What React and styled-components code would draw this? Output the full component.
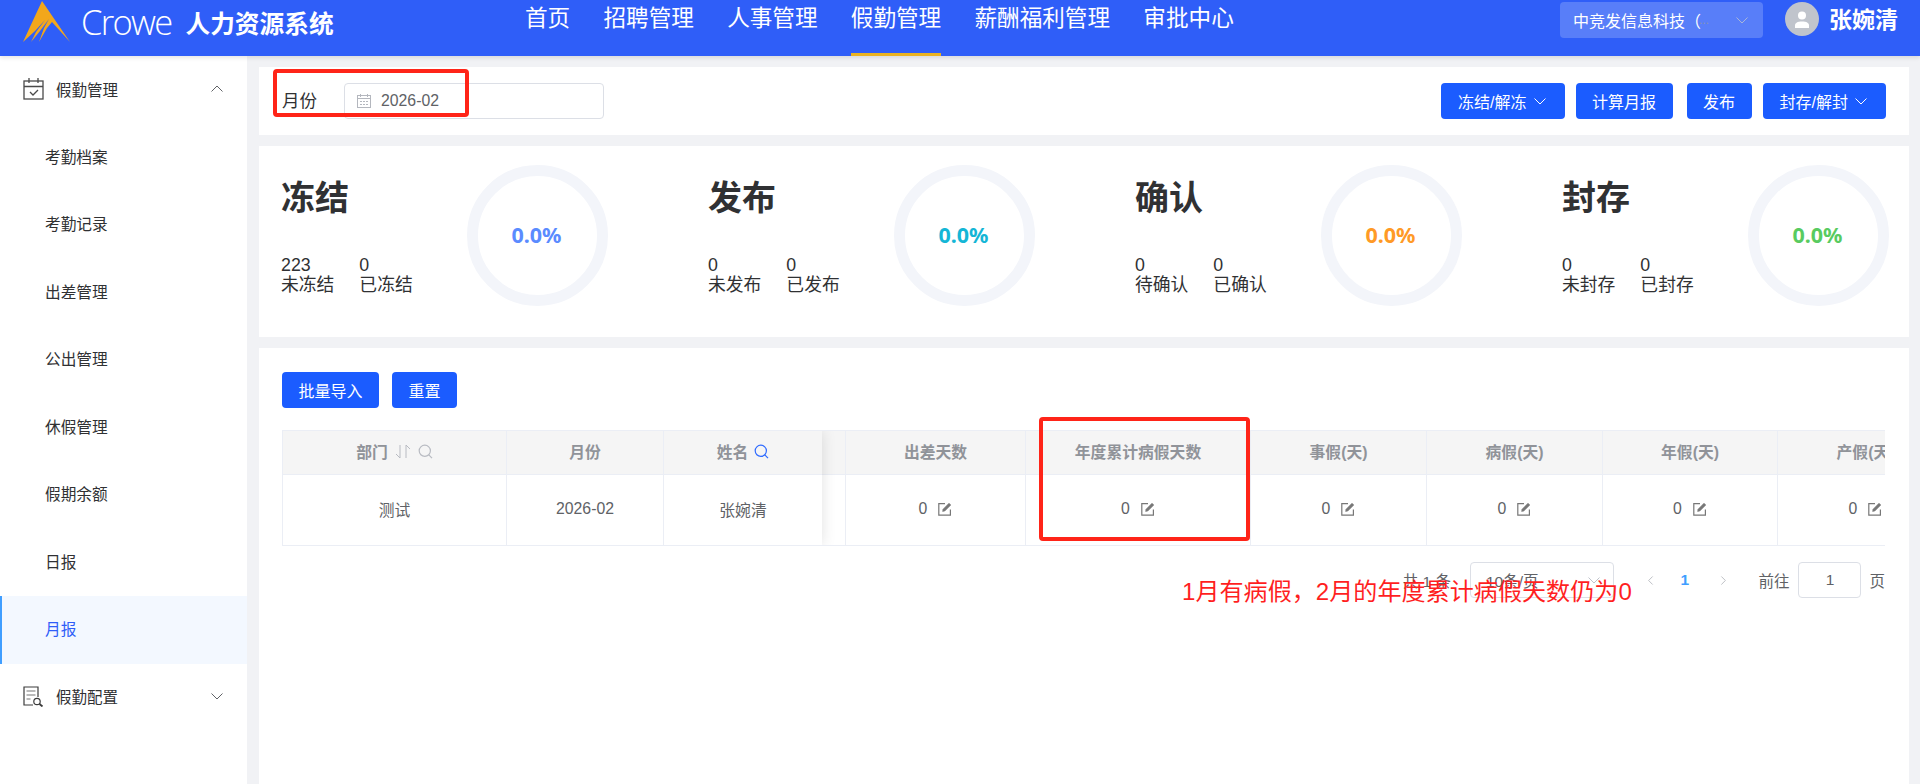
import React from "react";
import styled, { createGlobalStyle } from "styled-components";
import { ChevronLeft, ChevronRight } from "lucide-react";

const GlobalStyle = createGlobalStyle`
  html, body {
    margin: 0;
    padding: 0;
    background: #f1f2f5;
    font-family: "Liberation Sans", "Noto Sans CJK SC", sans-serif;
  }
  * {
    box-sizing: border-box;
  }
`;

const NAV_ITEMS = ["首页", "招聘管理", "人事管理", "假勤管理", "薪酬福利管理", "审批中心"];
const SUB_MENU = ["考勤档案", "考勤记录", "出差管理", "公出管理", "休假管理", "假期余额", "日报", "月报"];
const STATS = [
  { title: "冻结", a: "223", aLabel: "未冻结", b: "0", bLabel: "已冻结", color: "#5a8bff" },
  { title: "发布", a: "0", aLabel: "未发布", b: "0", bLabel: "已发布", color: "#14b6d6" },
  { title: "确认", a: "0", aLabel: "待确认", b: "0", bLabel: "已确认", color: "#ff9a26" },
  { title: "封存", a: "0", aLabel: "未封存", b: "0", bLabel: "已封存", color: "#58cb60" },
];
const DAY_COLUMNS = [
  { title: "出差天数", width: 180 },
  { title: "年度累计病假天数", width: 225 },
  { title: "事假(天)", width: 176 },
  { title: "病假(天)", width: 176 },
  { title: "年假(天)", width: 175 },
  { title: "产假(天)", width: 176 },
];

const Page = styled.div`
  position: relative;
  width: 1920px;
  height: 784px;
  overflow: hidden;
  display: flex;
  flex-direction: column;
`;

const Header = styled.header`
  height: 56px;
  flex: none;
  display: flex;
  align-items: flex-start;
  background: #2f5ef8;
  color: #fff;
  box-shadow: 0 2px 4px rgba(0, 0, 0, 0.1);
  position: relative;
  z-index: 2;
`;

const Brand = styled.div`
  width: 525px;
  height: 44px;
  padding-left: 23px;
  display: flex;
  align-items: center;
`;

const BrandName = styled.span`
  margin-left: 10px;
  font-family: "Open Sans", sans-serif;
  font-weight: 300;
  font-size: 34.5px;
  letter-spacing: -1.7px;
  line-height: 44px;
`;

const BrandTitle = styled.span`
  margin-left: 14px;
  font-size: 24.7px;
  font-weight: 700;
  white-space: nowrap;
`;

const Nav = styled.nav`
  display: flex;
  gap: 33.3px;
`;

const NavItem = styled.a`
  height: 56px;
  font-size: 22.6px;
  line-height: 37px;
  white-space: nowrap;
  border-bottom: 3px solid ${(p) => (p.$active ? "#e9b221" : "transparent")};
`;

const UserArea = styled.div`
  margin-left: auto;
  padding: 2px 22px 0 0;
  display: flex;
  align-items: flex-start;
`;

const CompanySelect = styled.div`
  width: 203px;
  height: 36px;
  padding: 0 15px 0 13px;
  border-radius: 4px;
  background: rgba(255, 255, 255, 0.2);
  display: flex;
  align-items: center;
  font-size: 16px;
  svg {
    margin-left: auto;
  }
`;

const Dots = styled.span`
  color: #8a94b0;
  font-size: 12px;
  margin-left: -2px;
`;

const Avatar = styled.div`
  width: 34px;
  height: 34px;
  margin: 0 10px 0 22px;
  border-radius: 50%;
  background: #c0c4cc;
  display: flex;
  align-items: center;
  justify-content: center;
`;

const UserName = styled.span`
  font-size: 23px;
  font-weight: 700;
  line-height: 36px;
`;

const Body = styled.div`
  flex: 1;
  display: flex;
  min-height: 0;
`;

const Sidebar = styled.aside`
  width: 247px;
  flex: none;
  background: #fff;
`;

const MenuGroup = styled.div`
  height: 67.5px;
  padding: 0 24px 2px 23px;
  display: flex;
  align-items: center;
  font-size: 15.5px;
  color: #303133;
  svg:first-child {
    margin-right: 12px;
  }
  svg:last-child {
    margin-left: auto;
  }
`;

const MenuItem = styled.div`
  height: 67.5px;
  padding: 0 0 2px ${(p) => (p.$active ? "43px" : "45px")};
  display: flex;
  align-items: center;
  font-size: 15.7px;
  color: ${(p) => (p.$active ? "#2f5ef8" : "#303133")};
  background: ${(p) => (p.$active ? "#f3f8ff" : "transparent")};
  border-left: ${(p) => (p.$active ? "2px solid #409eff" : "none")};
`;

const Main = styled.main`
  flex: 1;
  min-width: 0;
  padding: 11px 11px 0 12px;
  display: flex;
  flex-direction: column;
  gap: 11px;
`;

const Card = styled.section`
  background: #fff;
`;

const FilterCard = styled(Card)`
  height: 68px;
  padding: 16px 23px 0 23px;
  display: flex;
  align-items: flex-start;
`;

const FilterLabel = styled.label`
  width: 62px;
  font-size: 17.5px;
  line-height: 37px;
  color: #303133;
`;

const DateInput = styled.div`
  width: 260px;
  height: 36px;
  padding-left: 12px;
  border: 1px solid #dcdfe6;
  border-radius: 4px;
  display: flex;
  align-items: center;
  gap: 10px;
  font-size: 15.8px;
  color: #606266;
`;

const Actions = styled.div`
  margin-left: auto;
  display: flex;
`;

const Button = styled.button`
  height: 36px;
  padding: ${(p) => (p.$caret ? "0 19px 0 17px" : "0 16.5px")};
  margin-left: ${(p) => p.$gap || 0}px;
  border: none;
  border-radius: 4px;
  background: #1b5cff;
  color: #fff;
  font: inherit;
  font-size: 16px;
  display: flex;
  align-items: center;
  gap: 7px;
  white-space: nowrap;
`;

const StatsCard = styled(Card)`
  height: 191px;
  padding: 19px 20px 0 22px;
  display: flex;
  justify-content: space-between;
`;

const StatBlock = styled.div`
  width: 327px;
  display: flex;
  justify-content: space-between;
`;

const StatTitle = styled.h2`
  margin: 13px 0 37px;
  font-size: 34px;
  line-height: 40px;
  font-weight: 700;
  color: #303133;
`;

const StatCounts = styled.div`
  display: flex;
  gap: 25px;
  font-size: 17.8px;
  line-height: 20px;
  color: #303133;
`;

const StatCount = styled.div`
  display: flex;
  flex-direction: column;
`;

const Ring = styled.div`
  width: 141px;
  height: 141px;
  padding: 0 2px 2px 0;
  border: 11.5px solid #f3f5fa;
  border-radius: 50%;
  display: flex;
  align-items: center;
  justify-content: center;
  font-family: "Noto Sans", sans-serif;
  font-size: 21.5px;
  font-weight: 700;
  color: ${(p) => p.$color};
`;

const TableCard = styled(Card)`
  flex: 1;
  padding: 24px 24px 0 23px;
`;

const TableTools = styled.div`
  display: flex;
  gap: 13px;
`;

const Table = styled.div`
  margin-top: 22px;
  height: 116px;
  display: flex;
  overflow: hidden;
  border: 1px solid #ebeef5;
  border-right: none;
`;

const FixedPane = styled.div`
  flex: none;
  display: flex;
  position: relative;
  z-index: 1;
  box-shadow: 0 0 14px rgba(0, 0, 0, 0.12);
`;

const ScrollPane = styled.div`
  display: flex;
  flex: none;
`;

const Column = styled.div`
  width: ${(p) => p.$width}px;
  flex: none;
  display: flex;
  flex-direction: column;
  border-right: ${(p) => (p.$flush ? "none" : "1px solid #ebeef5")};
`;

const HeadCell = styled.div`
  height: 44px;
  flex: none;
  padding-bottom: 2px;
  background: #f5f5f5;
  border-bottom: 1px solid #ebeef5;
  display: flex;
  align-items: center;
  justify-content: center;
  gap: 6px;
  font-size: 15.8px;
  font-weight: 700;
  color: #909399;
  white-space: nowrap;
`;

const BodyCell = styled.div`
  flex: 1;
  padding-bottom: 2px;
  display: flex;
  align-items: center;
  justify-content: center;
  gap: 11px;
  font-size: 15.8px;
  color: #606266;
  white-space: nowrap;
`;

const Pagination = styled.div`
  margin-top: 16px;
  display: flex;
  align-items: center;
  justify-content: flex-end;
  font-size: 15.5px;
  color: #606266;
`;

const PageSize = styled.div`
  width: 144px;
  height: 36px;
  margin: 0 18px 0 19px;
  padding: 0 13px 0 15px;
  border: 1px solid #dcdfe6;
  border-radius: 4px;
  display: flex;
  align-items: center;
  justify-content: space-between;
`;

const PagerButton = styled.div`
  width: 36.5px;
  margin-left: ${(p) => (p.$current ? "-2px" : "0")};
  margin-right: ${(p) => (p.$current ? "2px" : "0")};
  display: flex;
  justify-content: center;
  font-weight: 700;
  color: ${(p) => (p.$current ? "#409eff" : "#a8abb2")};
`;

const PageJump = styled.div`
  width: 63px;
  height: 36px;
  margin: 0 8px 0 9px;
  border: 1px solid #dcdfe6;
  border-radius: 4px;
  display: flex;
  align-items: center;
  justify-content: center;
`;

const JumpLabel = styled.span`
  margin-left: 17px;
`;

/* annotations drawn on top of the screenshot */
const Mark = styled.div`
  position: absolute;
  z-index: 3;
  left: ${(p) => p.$x}px;
  top: ${(p) => p.$y}px;
  width: ${(p) => p.$w}px;
  height: ${(p) => p.$h}px;
  border: 4.5px solid #ff2418;
  border-radius: 4px;
`;

const Note = styled.div`
  position: absolute;
  z-index: 3;
  left: 1182px;
  top: 576px;
  font-size: 24.1px;
  line-height: 32px;
  color: #ff1f1f;
  white-space: nowrap;
`;

const Logo = () => (
  <svg width="48" height="42" viewBox="0 0 48 42">
    <path
      d="M19 0 L47 41 L29 21 L24 27 L16 41 L21 27 L26 18 L17 30 L8 41 L13 31 L22 19 L12 30 L0 41 Z"
      fill="#f2a71b"
    />
  </svg>
);

const Caret = ({ up, color = "#fff" }) => (
  <svg width="12" height="7" viewBox="0 0 12 7" fill="none" stroke={color} strokeWidth="1">
    <path d={up ? "M0.5 6.5L6 1l5.5 5.5" : "M0.5 0.5L6 6l5.5-5.5"} />
  </svg>
);

const CalendarCheckIcon = () => (
  <svg width="21" height="24" viewBox="0 0 21 24" fill="none" stroke="#4a4a4a" strokeWidth="1.3">
    <rect x="1" y="4" width="19" height="18" />
    <path d="M1 9.5h19M6 1v5M15 1v5M7 15l3 3 5-5" />
  </svg>
);

const ReportSearchIcon = () => (
  <svg width="21" height="21" viewBox="0 0 21 21" fill="none" stroke="#3c3c3c" strokeWidth="1.2">
    <path d="M10 19H1V1h14v10" />
    <path d="M3.5 5h9M3.5 9h9M3.5 13h4" stroke="#777" />
    <circle cx="14" cy="15.5" r="3.2" />
    <path d="M16.5 18l3 2.5" strokeWidth="1.8" />
  </svg>
);

const SmallCalendar = () => (
  <svg width="14" height="14" viewBox="0 0 14 14" fill="none" stroke="#b4b7be" strokeWidth="1">
    <rect x="0.5" y="1.5" width="13" height="12" />
    <path d="M0.5 4.5h13M3.5 0v3M10.5 0v3M3 7.5h2M6 7.5h2M9 7.5h2M3 10.5h2M6 10.5h2M9 10.5h2" />
  </svg>
);

const UserGlyph = () => (
  <svg width="16" height="17" viewBox="0 0 16 17" fill="#fff">
    <circle cx="8" cy="4.5" r="4" />
    <path d="M1 17v-2.5C1 12 3.5 10.5 8 10.5s7 1.5 7 4V17z" />
  </svg>
);

const SearchIcon = ({ color }) => (
  <svg width="15" height="15" viewBox="0 0 15 15" fill="none" stroke={color} strokeWidth="1.2">
    <circle cx="6.8" cy="6.8" r="5.6" />
    <path d="M10.8 10.8l3.2 3.4" />
  </svg>
);

const SortIcon = () => (
  <svg width="18" height="15" viewBox="0 0 18 15" fill="none" stroke="#b8bbc2" strokeWidth="1">
    <path d="M6 1v13L2 10M12 14V1l4 4" />
  </svg>
);

const EditIcon = () => (
  <svg width="14" height="14" viewBox="0 0 14 14" fill="none" stroke="#777" strokeWidth="1.2">
    <path d="M7 1.6H0.8v11.6h11.6V7.4" />
    <path d="M4.6 9.4l.5-2.2L11 1.2l1.8 1.8-6 6z" fill="#777" strokeWidth="0.6" />
  </svg>
);

function Cell({ value }) {
  return (
    <BodyCell>
      {value}
      <EditIcon />
    </BodyCell>
  );
}

export default function App() {
  return (
    <Page>
      <GlobalStyle />
      <Header>
        <Brand>
          <Logo />
          <BrandName>Crowe</BrandName>
          <BrandTitle>人力资源系统</BrandTitle>
        </Brand>
        <Nav>
          {NAV_ITEMS.map((item) => (
            <NavItem key={item} $active={item === "假勤管理"}>
              {item}
            </NavItem>
          ))}
        </Nav>
        <UserArea>
          <CompanySelect>
            中竞发信息科技（<Dots>...</Dots>
            <Caret color="#a9b6d8" />
          </CompanySelect>
          <Avatar>
            <UserGlyph />
          </Avatar>
          <UserName>张婉清</UserName>
        </UserArea>
      </Header>
      <Body>
        <Sidebar>
          <MenuGroup>
            <CalendarCheckIcon />
            假勤管理
            <Caret up color="#606266" />
          </MenuGroup>
          {SUB_MENU.map((item) => (
            <MenuItem key={item} $active={item === "月报"}>
              {item}
            </MenuItem>
          ))}
          <MenuGroup>
            <ReportSearchIcon />
            假勤配置
            <Caret color="#606266" />
          </MenuGroup>
        </Sidebar>
        <Main>
          <FilterCard>
            <FilterLabel>月份</FilterLabel>
            <DateInput>
              <SmallCalendar />
              2026-02
            </DateInput>
            <Actions>
              <Button $caret>
                冻结/解冻
                <Caret />
              </Button>
              <Button $gap={11}>计算月报</Button>
              <Button $gap={14}>发布</Button>
              <Button $gap={11} $caret>
                封存/解封
                <Caret />
              </Button>
            </Actions>
          </FilterCard>
          <StatsCard>
            {STATS.map((stat) => (
              <StatBlock key={stat.title}>
                <div>
                  <StatTitle>{stat.title}</StatTitle>
                  <StatCounts>
                    <StatCount>
                      <span>{stat.a}</span>
                      <span>{stat.aLabel}</span>
                    </StatCount>
                    <StatCount>
                      <span>{stat.b}</span>
                      <span>{stat.bLabel}</span>
                    </StatCount>
                  </StatCounts>
                </div>
                <Ring $color={stat.color}>0.0%</Ring>
              </StatBlock>
            ))}
          </StatsCard>
          <TableCard>
            <TableTools>
              <Button>批量导入</Button>
              <Button>重置</Button>
            </TableTools>
            <Table>
              <FixedPane>
                <Column $width={224}>
                  <HeadCell>
                    部门
                    <SortIcon />
                    <SearchIcon color="#b8bbc2" />
                  </HeadCell>
                  <BodyCell>测试</BodyCell>
                </Column>
                <Column $width={157}>
                  <HeadCell>月份</HeadCell>
                  <BodyCell>2026-02</BodyCell>
                </Column>
                <Column $width={158} $flush>
                  <HeadCell>
                    姓名
                    <SearchIcon color="#2f6bff" />
                  </HeadCell>
                  <BodyCell>张婉清</BodyCell>
                </Column>
              </FixedPane>
              <ScrollPane>
                <Column $width={24}>
                  <HeadCell />
                  <BodyCell />
                </Column>
                {DAY_COLUMNS.map((col) => (
                  <Column key={col.title} $width={col.width}>
                    <HeadCell>{col.title}</HeadCell>
                    <Cell value="0" />
                  </Column>
                ))}
              </ScrollPane>
            </Table>
            <Pagination>
              <span>共 1 条</span>
              <PageSize>
                10条/页
                <Caret color="#c0c4cc" />
              </PageSize>
              <PagerButton>
                <ChevronLeft size={15} strokeWidth={1.2} />
              </PagerButton>
              <PagerButton $current>1</PagerButton>
              <PagerButton>
                <ChevronRight size={15} strokeWidth={1.2} />
              </PagerButton>
              <JumpLabel>前往</JumpLabel>
              <PageJump>1</PageJump>
              <span>页</span>
            </Pagination>
          </TableCard>
        </Main>
      </Body>
      <Mark $x={273} $y={69} $w={196} $h={48} />
      <Mark $x={1039} $y={417} $w={211} $h={124} />
      <Note>1月有病假，2月的年度累计病假天数仍为0</Note>
    </Page>
  );
}
